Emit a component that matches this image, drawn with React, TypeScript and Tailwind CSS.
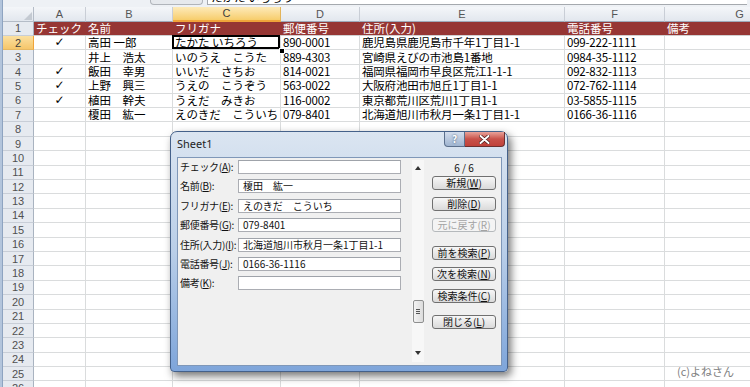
import React from "react";

const cols = [52, 87, 108, 79, 205, 100, 150];
const letters = ["A", "B", "C", "D", "E", "F", "G"];

const data: string[][] = [
  ["チェック", "名前", "フリガナ", "郵便番号", "住所(入力)", "電話番号", "備考"],
  ["✓", "高田 一郎", "たかた いちろう", "890-0001", "鹿児島県鹿児島市千年1丁目1-1", "099-222-1111", ""],
  ["", "井上　浩太", "いのうえ　こうた", "889-4303", "宮崎県えびの市池島1番地", "0984-35-1112", ""],
  ["✓", "飯田　幸男", "いいだ　さちお", "814-0021", "福岡県福岡市早良区荒江1-1-1", "092-832-1113", ""],
  ["✓", "上野　興三", "うえの　こうぞう", "563-0022", "大阪府池田市旭丘1丁目1-1", "072-762-1114", ""],
  ["✓", "植田　幹夫", "うえだ　みきお", "116-0002", "東京都荒川区荒川1丁目1-1", "03-5855-1115", ""],
  ["", "榎田　紘一", "えのきだ　こういち", "079-8401", "北海道旭川市秋月一条1丁目1-1", "0166-36-1116", ""],
];

const jp = "font-['Noto_Sans_CJK_JP',sans-serif]";

function Label({ text, k }: { text: string; k: string }) {
  return (
    <span className="whitespace-nowrap tracking-[-0.3px]">
      {text}(<u>{k}</u>):
    </span>
  );
}

const fields: { label: string; k: string; value: string }[] = [
  { label: "チェック", k: "A", value: "" },
  { label: "名前", k: "B", value: "榎田　紘一" },
  { label: "フリガナ", k: "E", value: "えのきだ　こういち" },
  { label: "郵便番号", k: "G", value: "079-8401" },
  { label: "住所(入力)", k: "I", value: "北海道旭川市秋月一条1丁目1-1" },
  { label: "電話番号", k: "J", value: "0166-36-1116" },
  { label: "備考", k: "K", value: "" },
];

function Btn({ text, k, mt, disabled }: { text: string; k: string; mt: string; disabled?: boolean }) {
  return (
    <div
      className={
        "h-[14px] w-[64px] rounded-[3px] border flex items-center justify-center text-[10px] leading-[12px] " +
        mt +
        (disabled
          ? " border-[#b5b9bc] bg-[#f4f4f4] text-[#a3a3a3]"
          : " border-[#707070] bg-gradient-to-b from-[#f7f7f7] to-[#dadada] text-[#111]")
      }
    >
      <span>
        {text}(<u>{k}</u>)
      </span>
    </div>
  );
}

export default function App() {
  return (
    <div className={"relative w-[750px] h-[387px] overflow-hidden bg-white flex " + jp}>
      {/* window left edge */}
      <div className="w-[3px] h-full bg-[#b3c5dc] border-r border-[#8ea4c1] shrink-0" />
      <div className="flex-1 flex flex-col min-w-0">
        {/* formula bar strip */}
        <div className="h-[7px] flex bg-[#eef1f5] shrink-0">
          <div className="w-[147px]" />
          <div className="w-[53px] h-[5px] border border-t-0 border-[#b0b4ba] rounded-b-[4px] bg-[#e6e9ed]" />
          <div className="w-[4px]" />
          <div className="w-[540px] h-[5px] bg-white border-l border-b border-[#a5a9ae] overflow-hidden">
            <div className="pl-[3px] -mt-[10px] text-[11.5px] leading-[14px] text-black whitespace-nowrap">たかた いちろう</div>
          </div>
        </div>
        {/* column header */}
        <div className="h-[14.7px] flex shrink-0">
          <div className="w-[31px] shrink-0 bg-gradient-to-b from-[#f4f6f9] to-[#e2e7ee] border-r border-b border-[#b4bcc7] flex items-end justify-end">
            <svg width="8" height="8" className="mb-[1px] mr-[1px]">
              <polygon points="8,0 8,8 0,8" fill="#c4cad2" />
            </svg>
          </div>
          {cols.map((w, i) => (
            <div
              key={i}
              style={{ width: w }}
              className={
                "shrink-0 border-r flex items-center justify-center text-[11px] leading-[12px] font-['Liberation_Sans',sans-serif] " +
                (i === 2
                  ? "bg-gradient-to-b from-[#fdeab8] to-[#f7cd6a] border-[#e3b45a] border-b-2 border-b-[#f0a43a] text-[#3d3d3d]"
                  : "bg-gradient-to-b from-[#f4f6f9] to-[#e2e7ee] border-[#c9ced6] border-b border-b-[#9eaaba] text-[#555]")
              }
            >
              {letters[i]}
            </div>
          ))}
        </div>
        {/* rows */}
        {Array.from({ length: 26 }, (_, r) => {
          const rowNum = r + 1;
          const d = data[r];
          const isHeader = r === 0;
          return (
            <div key={r} className="h-[14.4px] flex shrink-0">
              <div
                className={
                  "w-[31px] shrink-0 border-b border-r flex items-center justify-center text-[11px] leading-[12px] font-['Liberation_Sans',sans-serif] " +
                  (rowNum === 2
                    ? "bg-gradient-to-b from-[#fbe0a0] to-[#f5c66a] border-b-[#e6b863] border-r-[#f0a43a] text-[#3d3d3d]"
                    : "bg-[#e6eaf0] border-b-[#c8ced7] border-r-[#a9b3c0] text-[#505050]")
                }
              >
                {rowNum}
              </div>
              {cols.map((w, c) => {
                const v = d ? d[c] : "";
                const sel = rowNum === 2 && c === 2;
                return (
                  <div
                    key={c}
                    style={{ width: w }}
                    className={
                      "relative shrink-0 flex items-center text-[11.5px] leading-[13px] whitespace-nowrap " +
                      (isHeader
                        ? "bg-[#963634] text-white border-b border-[#d0d0d0] pl-[2px]"
                        : "border-r border-b border-[#dadcdd] text-black " + (c === 0 ? "justify-center" : "pl-[2px]"))
                    }
                  >
                    {c === 0 && !isHeader && v ? (
                      <span className="font-['DejaVu_Sans',sans-serif] font-bold text-[12px] leading-[13px]">{v}</span>
                    ) : (
                      <span className={c >= 3 && !isHeader ? "tracking-[-0.2px]" : ""}>{v}</span>
                    )}
                    {sel && (
                      <div className="absolute -left-[1px] -top-[1px] right-0 bottom-0 border-2 border-black" />
                    )}
                  </div>
                );
              })}
            </div>
          );
        })}
      </div>
      {/* fill handle of selected cell */}
      <div className="absolute left-[279px] top-[48px] w-[6px] h-[6px] bg-black border border-white" />

      {/* Dialog */}
      <div className="absolute left-[170px] top-[131px] w-[338px] h-[241px] rounded-t-[7px] rounded-b-[4px] border border-[#45618a] bg-gradient-to-b from-[#dbe5f1] via-[#b9cee8] to-[#7ea5da] shadow-[3px_4px_9px_rgba(0,0,0,0.55)] flex flex-col">
        <div className="h-[25px] flex items-start shrink-0">
          <span className="pl-[6px] pt-[5px] text-[11px] leading-[14px] text-[#1e1e1e] font-['Noto_Sans',sans-serif]">Sheet1</span>
          <div className="ml-auto mr-[2px] flex">
            <div className="w-[21px] h-[15px] rounded-bl-[4px] border border-t-0 border-[#5b6f8c] bg-gradient-to-b from-[#d3dded] to-[#9fb4d0] flex items-center justify-center text-[10px] font-bold text-white leading-[12px] [text-shadow:0_0_2px_#34465f]">
              ?
            </div>
            <div className="w-[40px] h-[15px] rounded-br-[4px] border border-t-0 border-l-0 border-[#6b2f2f] bg-gradient-to-b from-[#e8a29a] via-[#c8514a] to-[#c0413a] flex items-center justify-center">
              <svg width="11" height="9" viewBox="0 0 11 9">
                <path d="M1.5 1 L9.5 8 M9.5 1 L1.5 8" stroke="#4a1a1a" strokeWidth="3.4" strokeLinecap="round" />
                <path d="M1.5 1 L9.5 8 M9.5 1 L1.5 8" stroke="#ffffff" strokeWidth="2" strokeLinecap="round" />
              </svg>
            </div>
          </div>
        </div>
        <div className="ml-[6px] mr-[5px] h-[209px] border border-[#7f97b8] bg-[#f0f0f0] flex text-[10px] text-[#111]">
          {/* form */}
          <div className="w-[234px] pt-[2px] pl-[2px] flex flex-col gap-[5.4px] shrink-0">
            {fields.map((f, i) => (
              <div key={i} className="h-[14px] flex items-center">
                <div className="w-[58px] shrink-0 leading-[12px]">
                  <Label text={f.label} k={f.k} />
                </div>
                <div className="w-[163px] h-[14px] bg-white border border-[#abadb3] border-t-[#9fa3aa] flex items-center pl-[4px] leading-[12px] whitespace-nowrap overflow-hidden">
                  {f.value}
                </div>
              </div>
            ))}
          </div>
          {/* scrollbar */}
          <div className="w-[12px] mt-[2px] h-[202px] bg-[#f7f7f7] flex flex-col items-center shrink-0">
            <svg width="6" height="4" className="mt-[6px]">
              <polygon points="3,0 6,4 0,4" fill="#333" />
            </svg>
            <div className="mt-[130px] w-[11px] h-[23px] rounded-[2px] border border-[#8e8f8f] bg-gradient-to-r from-[#f3f3f3] to-[#dcdcdc] flex flex-col items-center justify-center gap-[1px]">
              <div className="w-[4px] h-[1px] bg-[#555]" />
              <div className="w-[4px] h-[1px] bg-[#555]" />
              <div className="w-[4px] h-[1px] bg-[#555]" />
            </div>
            <svg width="6" height="4" className="mt-[28px]">
              <polygon points="0,0 6,0 3,4" fill="#333" />
            </svg>
          </div>
          {/* buttons */}
          <div className="ml-[8px] pt-[2px] flex flex-col">
            <div className="h-[16px] w-[64px] flex items-center justify-center leading-[12px] text-[10px]">6 / 6</div>
            <Btn text="新規" k="W" mt="" />
            <Btn text="削除" k="D" mt="mt-[7px]" />
            <Btn text="元に戻す" k="R" mt="mt-[7px]" disabled />
            <Btn text="前を検索" k="P" mt="mt-[14px]" />
            <Btn text="次を検索" k="N" mt="mt-[7px]" />
            <Btn text="検索条件" k="C" mt="mt-[8px]" />
            <Btn text="閉じる" k="L" mt="mt-[12px]" />
          </div>
        </div>
      </div>

      {/* copyright */}
      <div className="absolute left-[677px] top-[364px] text-[11px] leading-[14px] text-[#808080]">(c)よねさん</div>
    </div>
  );
}
